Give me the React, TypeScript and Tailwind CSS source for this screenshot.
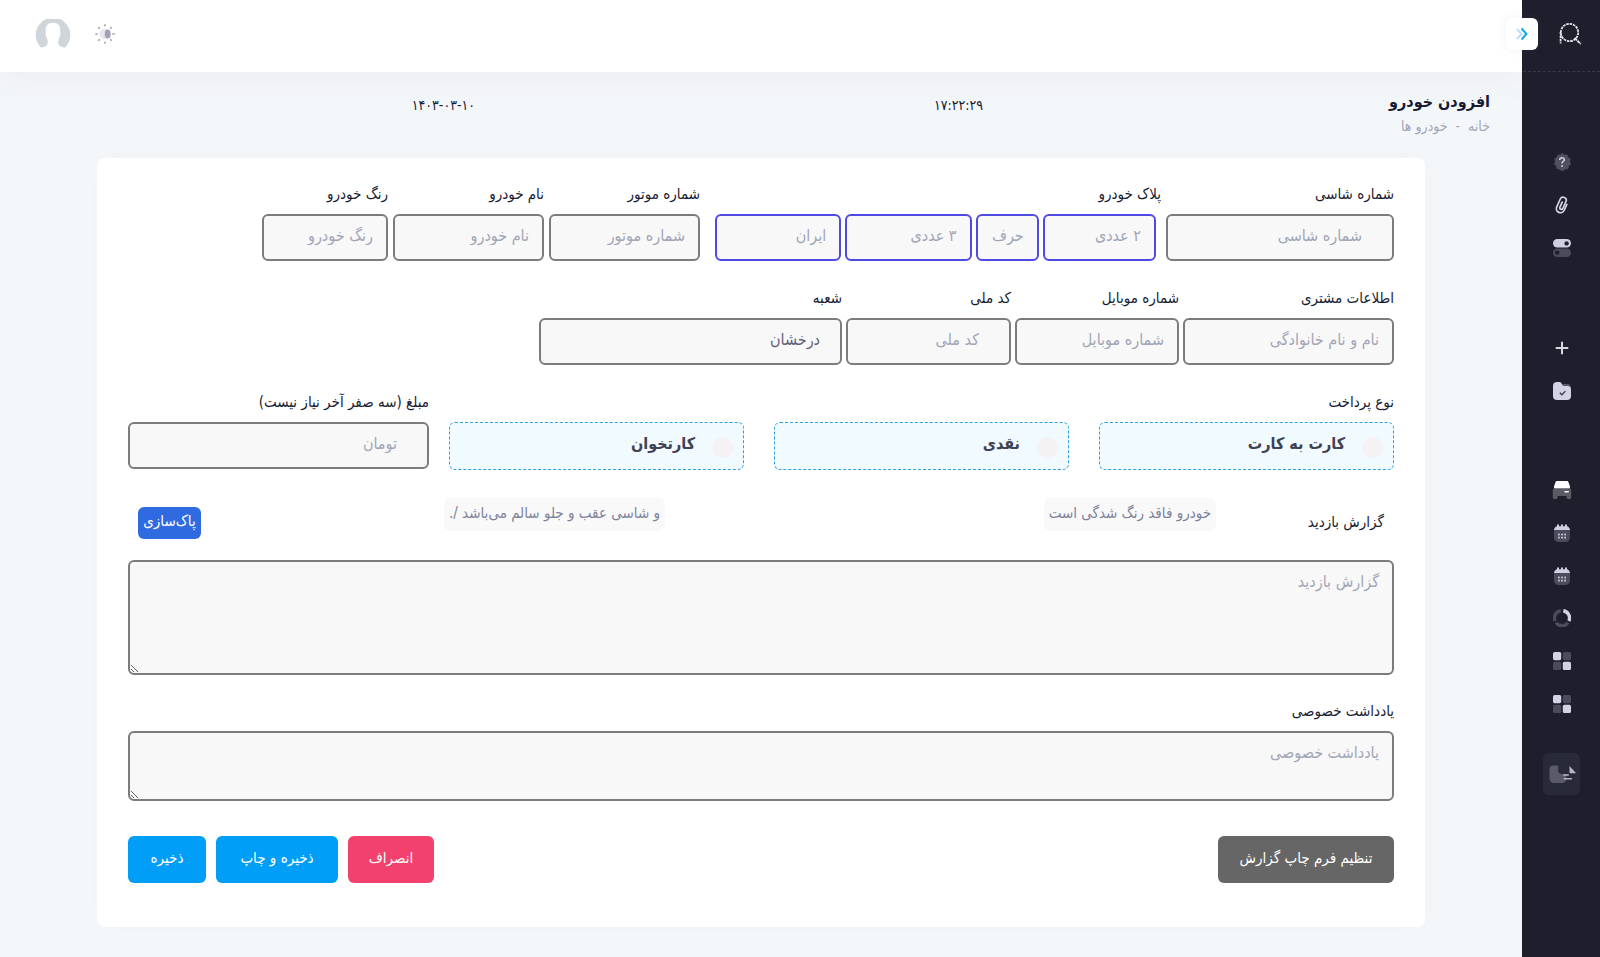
import type { ReactNode } from "react";
import clsx from "clsx";

const inputStyle =
  "block h-[47px] w-full min-w-0 appearance-none rounded-md border-2 bg-[#f8f8f8] pb-1 text-base text-[#5e6278] outline-none placeholder:text-[#a1a5b7]";

const textareaStyle =
  "block w-full rounded-md border-2 border-[#7c7c7c] bg-[#f8f8f8] px-[13px] py-2 text-base leading-6 text-[#5e6278] outline-none placeholder:text-[#a1a5b7]";

const chipStyle = "h-[33px] rounded-md bg-[#f9f9f9] px-[5px] pb-[2px] text-[15px] text-[#7e8299]";

type FieldProps = {
  id: string;
  label: string;
  placeholder?: string;
  wide?: boolean;
};

function Field({ id, label, placeholder = label, wide }: FieldProps) {
  return (
    <div>
      <FieldLabel htmlFor={id}>{label}</FieldLabel>
      <input
        id={id}
        placeholder={placeholder}
        className={clsx(inputStyle, "border-[#7c7c7c]", wide ? "px-[30px]" : "px-[13px]")}
      />
    </div>
  );
}

function FieldLabel({ htmlFor, children }: { htmlFor?: string; children: ReactNode }) {
  return (
    <label htmlFor={htmlFor} className="mb-2 block h-6 whitespace-nowrap text-[15px] leading-6 text-[#181c32]">
      {children}
    </label>
  );
}

function PlateInput({ label }: { label: string }) {
  return (
    <input
      aria-label={label}
      placeholder={label}
      className={clsx(inputStyle, "border-[#4f4ae4] px-[13px]")}
    />
  );
}

function PaymentOption({ id, label }: { id: string; label: string }) {
  return (
    <label
      htmlFor={id}
      className="flex h-12 items-center gap-[17px] rounded-md border border-dashed border-[#2f9fdf] bg-[#f1faff] ps-[10px] text-[#3f4254]"
    >
      <input
        id={id}
        type="radio"
        name="payment"
        className="mt-[2px] size-[21px] appearance-none rounded-full bg-[#f4f2f3] checked:bg-[#009ef7]"
      />
      <span className="pb-1 text-base font-bold leading-6">{label}</span>
    </label>
  );
}

function Logo() {
  return (
    <svg viewBox="0 0 24 24" className="size-6 fill-none stroke-[#e4e4ec]" strokeWidth="1.8">
      <circle cx="11.5" cy="10.5" r="8.7" strokeDasharray="2.6 .8" />
      <path d="M2.6 10v11.5" strokeDasharray="2.6 .8" />
      <path d="M16.5 16l6.3 6" strokeDasharray="3.4 .6" />
    </svg>
  );
}

function HelpIcon() {
  return (
    <svg viewBox="0 0 18 18" className="size-[18px]">
      <path
        fill="#4f4f5f"
        stroke="#4f4f5f"
        strokeWidth="1.2"
        strokeLinejoin="round"
        d="M9 .6l2.1 1.700 2.700-.2.900 2.500 2.300 1.400-.6 2.600.9 2.500-2 1.800-.5 2.600-2.700.4L9 17.400l-2.100-1.500-2.700-.4-.5-2.600-2-1.800.9-2.500-.6-2.600 2.300-1.400.9-2.500 2.700.200z"
      />
      <path
        d="M6.7 7c0-1.400 1-2.200 2.300-2.200s2.300.9 2.300 2.100c0 1.500-2.200 1.600-2.200 3.100v.6"
        fill="none"
        stroke="#d0d0e0"
        strokeWidth="1.5"
      />
      <circle cx="9.1" cy="13" r="1" fill="#d0d0e0" />
    </svg>
  );
}

function ClipIcon() {
  return (
    <svg viewBox="0 0 18 18" className="size-[18px] fill-none stroke-[#d3d3e4]" strokeWidth="1.7" strokeLinecap="round">
      <g transform="rotate(24 9 9)">
        <path d="M13.2 6.5v6.4a4.1 4.1 0 0 1-8.2 0V4.2a3.1 3.1 0 0 1 6.2 0v7.6a1.6 1.6 0 0 1-3.2 0V6.2" />
      </g>
    </svg>
  );
}

function TogglesIcon() {
  return (
    <svg viewBox="0 0 18 18" className="size-[18px]">
      <rect y="0" width="18" height="8.6" rx="4.3" fill="#cfcfe2" />
      <rect y="9.4" width="18" height="8.6" rx="4.3" fill="#4b4b5b" />
      <circle cx="13.6" cy="4.4" r="2.2" fill="#1e1e2d" />
      <circle cx="4.2" cy="13.6" r="2.2" fill="#1e1e2d" />
    </svg>
  );
}

function PlusIcon() {
  return (
    <svg viewBox="0 0 18 18" className="size-[18px] stroke-[#d9d9e6]" strokeWidth="2" strokeLinecap="round">
      <path d="M9 3.5v11M3.5 9h11" />
    </svg>
  );
}

function FolderIcon() {
  return (
    <svg viewBox="0 0 18 18" className="size-[18px]">
      <path fill="#5b5b6a" d="M8 2h6.5A3.2 3.2 0 0 1 17.7 5.2v2H8z" />
      <path
        fill="#d3d3e6"
        d="M4 0h2c1.4 0 2.300.5 2.700 1.700.5 1.500 1.100 2.300 2.600 2.300h3.200A3.500 3.500 0 0 1 18 7.500V14a4 4 0 0 1-4 4H4a4 4 0 0 1-4-4V4a4 4 0 0 1 4-4z"
      />
      <path d="M6.8 10.8l2.1 2 3.5-3.7" fill="none" stroke="#3a3a4c" strokeWidth="1.3" />
    </svg>
  );
}

function CarIcon() {
  return (
    <svg viewBox="0 0 20 18" className="h-[18px] w-5">
      <path
        fill="#5b5b66"
        d="M2 7h16l1.200 2v7.600c0 .8-.5 1.400-1.300 1.400h-2.100c-.8 0-1.300-.6-1.300-1.400V15h-9v1.600c0 .8-.5 1.400-1.300 1.400H2.100C1.300 18 .8 17.400.8 16.600V9z"
      />
      <path fill="#fff" d="M5.200 0h9.600c.9 0 1.500.5 1.700 1.300L18 5.500c.3 1-.3 1.800-1.300 1.800H3.300C2.300 7.300 1.700 6.500 2 5.500l1.500-4.200C3.700.5 4.300 0 5.200 0z" />
      <rect x="12.3" y="9.9" width="4.6" height="1.5" rx=".7" fill="#fff" />
    </svg>
  );
}

function CalendarIcon() {
  return (
    <svg viewBox="0 0 18 18" className="size-[18px]">
      <path fill="#4b4b5b" d="M1 7h16v6.500a4.500 4.500 0 0 1-4.500 4.500h-7A4.500 4.500 0 0 1 1 13.500z" />
      <path
        fill="#cfcfe2"
        d="M1 6.200C1 4.300 2.300 2.700 4 2.300V1.200a1 1 0 0 1 2 0v1h2V1.200a1 1 0 0 1 2 0v1h2V1.200a1 1 0 0 1 2 0v1.100c1.700.4 3 2 3 3.900z"
      />
      <g fill="#c4c4d8">
        <rect x="5" y="9.6" width="1.8" height="1.8" />
        <rect x="8.1" y="9.6" width="1.8" height="1.8" />
        <rect x="11.2" y="9.6" width="1.8" height="1.8" />
        <rect x="5" y="12.7" width="1.8" height="1.8" />
        <rect x="8.1" y="12.7" width="1.8" height="1.8" />
        <rect x="11.2" y="12.7" width="1.8" height="1.8" />
      </g>
    </svg>
  );
}

function RingIcon() {
  return (
    <svg viewBox="0 0 18 18" className="size-[18px] fill-none" strokeWidth="3.4">
      <path d="M10.300 1.800A7.300 7.300 0 0 1 15.900 12" stroke="#d3d3e6" />
      <path d="M15 13.600A7.300 7.300 0 0 1 3 13.600" stroke="#4b4b5b" />
      <path d="M2.100 12A7.300 7.300 0 0 1 7.900 1.800" stroke="#4b4b5b" />
    </svg>
  );
}

function GridIcon() {
  return (
    <svg viewBox="0 0 18 18" className="size-[18px]">
      <rect width="8.2" height="8.2" rx="1.6" fill="#d3d3e6" />
      <rect x="9.8" width="8.2" height="8.2" rx="1.6" fill="#4b4b5b" />
      <rect y="9.8" width="8.2" height="8.2" rx="1.6" fill="#4b4b5b" />
      <rect x="9.8" y="9.8" width="8.2" height="8.2" rx="1.6" fill="#d3d3e6" />
    </svg>
  );
}

function DocsIcon() {
  return (
    <svg viewBox="0 0 28 18" className="h-[18px] w-7">
      <path
        fill="#5a5a68"
        d="M5.500.500h4.700V5.500c0 2.200 1.200 3.500 3.500 3.500h4.700v4.500a4.500 4.500 0 0 1-4.500 4.500H6A4.500 4.500 0 0 1 1.500 13.500v-9A4 4 0 0 1 5.500.500z"
      />
      <path fill="#b5b5c6" d="M21.500 1l6 6.500c.3.300.1.700-.3.700h-4.700c-.6 0-1-.4-1-1z" />
      <path d="M15.800 10h4.500M16.300 13.800h7" stroke="#b5b5c6" strokeWidth="1.6" strokeLinecap="round" />
    </svg>
  );
}

function ThemeIcon() {
  return (
    <svg viewBox="0 0 20 20" className="size-5">
      <circle cx="9.5" cy="10" r="5" fill="#e6e6ee" />
      <ellipse cx="12.7" cy="10" rx="3" ry="4.6" fill="#a3a1b5" />
      <g stroke="#a09eb0" strokeWidth="1.6" strokeLinecap="round">
        <path d="M10 .9v.8M10 18.300v.8M.9 10h1.200M17.900 10h1.200M3.700 3.700l.6.600M15.700 15.700l.6.600M3.700 16.300l.6-.6M15.700 4.300l.6-.6" />
      </g>
    </svg>
  );
}

function Avatar() {
  return (
    <svg viewBox="0 0 36 30" className="h-[30px] w-9">
      <path fill="#d0d5d9" d="M6 28.500A17.300 17.300 0 1 1 30 28.500Q18 31 6 28.500z" />
      <path
        fill="#fff"
        d="M5.500 30c1-2 5-1.700 6.500-4 1.300-2.200.8-5-.2-7.300-.7-1.500-1.400-2.200-1.300-3.500 0-.8.5-1 .3-2.200C10 7 12.500 3.700 18 3.700S26 7 25.200 13c-.2 1.200.3 1.400.3 2.200.1 1.300-.6 2-1.300 3.500-1 2.300-1.500 5.100-.2 7.300 1.500 2.300 5.500 2 6.500 4z"
      />
    </svg>
  );
}

type NavItem = { label: string; icon: ReactNode };

const helpLinks: NavItem[] = [
  { label: "راهنما", icon: <HelpIcon /> },
  { label: "پیوست ها", icon: <ClipIcon /> },
  { label: "تنظیمات", icon: <TogglesIcon /> },
];

const formLinks: NavItem[] = [
  { label: "افزودن", icon: <PlusIcon /> },
  { label: "پرونده ها", icon: <FolderIcon /> },
];

const reportLinks: NavItem[] = [
  { label: "خودرو ها", icon: <CarIcon /> },
  { label: "تقویم", icon: <CalendarIcon /> },
  { label: "نوبت ها", icon: <CalendarIcon /> },
  { label: "آمار", icon: <RingIcon /> },
  { label: "شعبه ها", icon: <GridIcon /> },
  { label: "کاربران", icon: <GridIcon /> },
];

function NavGroup({ items, className }: { items: NavItem[]; className: string }) {
  return (
    <nav className={clsx("flex w-full flex-col", className)}>
      {items.map((item) => (
        <a key={item.label} href="#" aria-label={item.label} className="flex flex-1 items-center justify-center">
          {item.icon}
        </a>
      ))}
    </nav>
  );
}

function Sidebar() {
  return (
    <aside className="relative z-10 flex w-[78px] shrink-0 flex-col items-center border-l border-[#1e1e2d] bg-[#1e1e2d]">
      <div className="flex h-[72px] w-full items-center justify-center border-b border-dashed border-[#393945] pb-1">
        <a href="#" aria-label="خانه" className="me-4">
          <Logo />
        </a>
      </div>
      <button
        type="button"
        aria-label="باز کردن منو"
        className="absolute -left-[17px] top-[18px] flex size-8 items-center justify-center rounded-md bg-white shadow-[0_0_10px_rgba(113,121,136,0.1)]"
      >
        <svg viewBox="0 0 14 14" className="size-[14px] fill-none" strokeWidth="2">
          <path d="M2 2l4.500 5L2 12" stroke="#b5e0fa" />
          <path d="M6.500 1.500l5 5.500-5 5.500" stroke="#1aa3ee" />
        </svg>
      </button>
      <NavGroup items={helpLinks} className="mt-[69px] h-32" />
      <NavGroup items={formLinks} className="mt-[58px] h-[85px]" />
      <NavGroup items={reportLinks} className="mt-[57px] h-64" />
      <a href="#" aria-label="مستندات" className="mt-7 flex h-[42px] w-[37px] items-center justify-center rounded-md bg-[#292a39]">
        <DocsIcon />
      </a>
    </aside>
  );
}

function CarForm() {
  return (
    <form className="mx-auto w-full max-w-[1328px] rounded-lg bg-white px-[31px] pt-6 pb-11 shadow-[0_0_20px_rgba(76,87,125,0.02)]">
      <div className="grid grid-cols-[228fr_456fr_151fr_151fr_126fr_129fr] gap-[5px]">
        <Field id="chassis" label="شماره شاسی" wide />
        <div>
          <FieldLabel>پلاک خودرو</FieldLabel>
          <div className="grid grid-cols-[113fr_63fr_126fr_126fr] gap-1 ps-[5px] pe-[10px]">
            <PlateInput label="۲ عددی" />
            <PlateInput label="حرف" />
            <PlateInput label="۳ عددی" />
            <PlateInput label="ایران" />
          </div>
        </div>
        <Field id="engine" label="شماره موتور" />
        <Field id="name" label="نام خودرو" />
        <Field id="color" label="رنگ خودرو" />
      </div>

      <div className="mt-[25px] grid grid-cols-[211fr_164fr_165fr_303fr_407fr] gap-1">
        <Field id="customer" label="اطلاعات مشتری" placeholder="نام و نام خانوادگی" />
        <Field id="mobile" label="شماره موبایل" />
        <Field id="national" label="کد ملی" wide />
        <div>
          <FieldLabel htmlFor="branch">شعبه</FieldLabel>
          <select id="branch" className={clsx(inputStyle, "border-[#7c7c7c] px-5")}>
            <option>درخشان</option>
          </select>
        </div>
      </div>

      <div className="mt-[25px] grid grid-cols-[945fr_301fr] gap-5">
        <fieldset>
          <legend className="mb-2 h-6 text-[15px] leading-6 text-[#181c32]">نوع پرداخت</legend>
          <div className="grid grid-cols-3 gap-[30px]">
            <PaymentOption id="card" label="کارت به کارت" />
            <PaymentOption id="cash" label="نقدی" />
            <PaymentOption id="pos" label="کارتخوان" />
          </div>
        </fieldset>
        <Field id="amount" label="مبلغ (سه صفر آخر نیاز نیست)" placeholder="تومان" wide />
      </div>

      <div className="mt-7 grid grid-cols-[178fr_551fr_537fr]">
        <label htmlFor="report" className="mt-3 ps-[10px] text-[15px] leading-6 text-[#181c32]">
          گزارش بازدید
        </label>
        <div>
          <button type="button" className={chipStyle}>
            خودرو فاقد رنگ شدگی است
          </button>
        </div>
        <div className="flex items-start justify-between pe-[10px]">
          <button type="button" className={chipStyle}>
            و شاسی عقب و جلو سالم می‌باشد /.
          </button>
          <button type="button" className="mt-[9px] h-8 w-[63px] rounded-md bg-[#2f6ae0] pb-1 text-[15px] text-white">
            پاک‌سازی
          </button>
        </div>
      </div>
      <textarea id="report" placeholder="گزارش بازدید" className={clsx(textareaStyle, "mt-[21px] h-[115px]")} />

      <div className="mt-6">
        <FieldLabel htmlFor="note">یادداشت خصوصی</FieldLabel>
        <textarea id="note" placeholder="یادداشت خصوصی" className={clsx(textareaStyle, "h-[70px]")} />
      </div>

      <div className="mt-[35px] flex gap-[10px] text-[15px] text-white">
        <button type="button" className="me-auto h-[47px] w-[176px] rounded-md bg-[#666666] pb-[2px]">
          تنظیم فرم چاپ گزارش
        </button>
        <button type="button" className="h-[47px] w-[86px] rounded-md bg-[#f1416c] pb-[2px]">
          انصراف
        </button>
        <button type="submit" className="h-[47px] w-[122px] rounded-md bg-[#009ef7] pb-[2px]">
          ذخیره و چاپ
        </button>
        <button type="submit" className="h-[47px] w-[78px] rounded-md bg-[#009ef7] pb-[2px]">
          ذخیره
        </button>
      </div>
    </form>
  );
}

function App() {
  return (
    <div dir="rtl" className="flex min-h-screen bg-[#f4f7fa] font-['DejaVu_Sans_Condensed','DejaVu_Sans',sans-serif]">
      <Sidebar />
      <div className="flex min-w-0 flex-1 flex-col">
        <header className="flex h-[72px] items-center justify-end gap-6 bg-white pb-1 pe-[35px] shadow-[0_10px_30px_rgba(82,63,105,0.05)]">
          <button type="button" aria-label="حالت نمایش">
            <ThemeIcon />
          </button>
          <button type="button" aria-label="حساب کاربری">
            <Avatar />
          </button>
        </header>
        <div className="grid h-[86px] grid-cols-[507fr_508fr_443fr] px-8 pt-4">
          <div>
            <h1 className="text-base font-bold leading-7 text-[#181c32]">افزودن خودرو</h1>
            <div className="flex gap-2 text-sm leading-5 text-[#a1a5b7]">
              <a href="#">خانه</a>
              <span>-</span>
              <span>خودرو ها</span>
            </div>
          </div>
          <span className="text-sm leading-[34px] text-[#181c32]">۱۷:۲۲:۲۹</span>
          <span className="text-sm leading-[34px] text-[#181c32]">۱۴۰۳-۰۳-۱۰</span>
        </div>
        <main className="px-8 pb-[30px]">
          <CarForm />
        </main>
      </div>
    </div>
  );
}

export default App;
